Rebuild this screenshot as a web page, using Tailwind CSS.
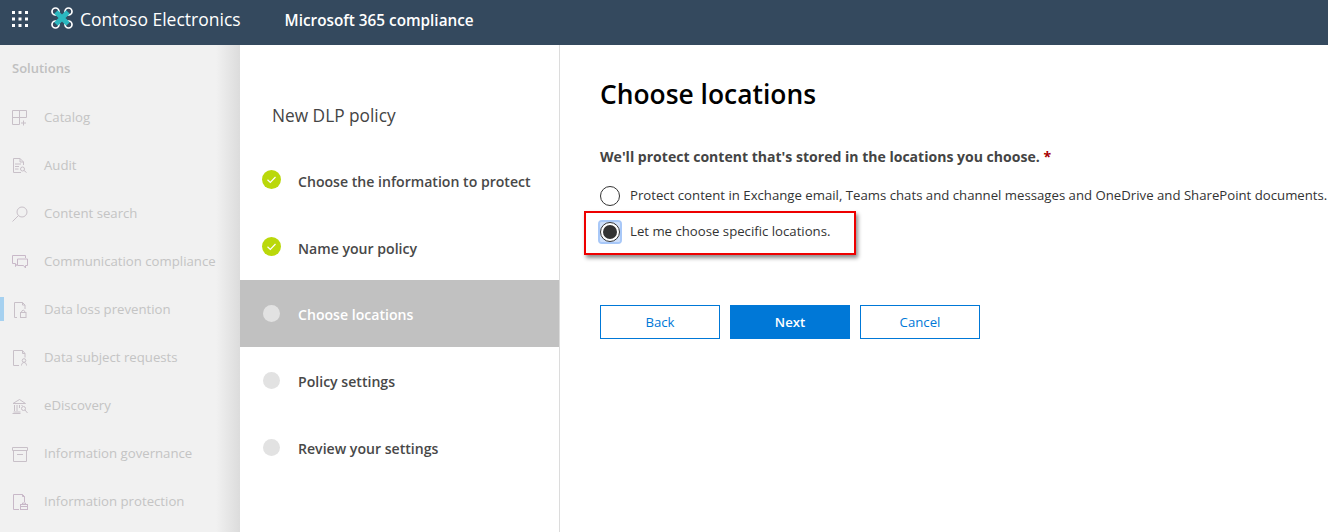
<!DOCTYPE html>
<html lang="en">
<head>
<meta charset="UTF-8">
<title>New DLP policy</title>
<script src="https://cdn.jsdelivr.net/npm/@tailwindcss/browser@4"></script>
</head>
<body class="h-[532px] w-[1328px] overflow-hidden bg-white font-['Open_Sans',sans-serif] text-[#333]">
  <!-- top bar -->
  <header class="flex h-[45px] items-center bg-[#34495e] pb-[8px] text-white">
    <svg class="ml-[12px] h-[16px] w-[16px]" viewBox="0 0 16 16" fill="#fff">
      <rect x="0" y="0" width="3" height="3"/><rect x="6.5" y="0" width="3" height="3"/><rect x="13" y="0" width="3" height="3"/>
      <rect x="0" y="6.5" width="3" height="3"/><rect x="6.5" y="6.5" width="3" height="3"/><rect x="13" y="6.5" width="3" height="3"/>
      <rect x="0" y="13" width="3" height="3"/><rect x="6.5" y="13" width="3" height="3"/><rect x="13" y="13" width="3" height="3"/>
    </svg>
    <svg class="mb-[2px] ml-[23px] h-[22px] w-[22px]" viewBox="0 0 22 22" fill="none">
      <circle cx="4.500" cy="4.500" r="3.500" stroke="#fff" stroke-width="1.700"/>
      <circle cx="17.500" cy="4.500" r="3.500" stroke="#fff" stroke-width="1.700"/>
      <circle cx="4.500" cy="17.500" r="3.500" stroke="#fff" stroke-width="1.700"/>
      <circle cx="17.500" cy="17.500" r="3.500" stroke="#fff" stroke-width="1.700"/>
      <path d="M5 5L17 17M17 5L5 17" stroke="#2bb8c0" stroke-width="5"/>
    </svg>
    <span class="ml-[7px] pt-[2px] text-[17.5px]">Contoso Electronics</span>
    <span class="ml-[44px] pt-[4px] text-[15.3px] font-semibold">Microsoft 365 compliance</span>
  </header>

  <div class="flex h-[487px]">
    <!-- faded nav -->
    <nav class="relative h-full w-[240px] shrink-0 bg-[#f1f1f1] bg-gradient-to-r from-[#f1f1f1] from-[90%] to-[#dcdcdc] text-[#c4c4c4]">
      <div class="pl-[12px] pt-[14px] text-[13px] font-semibold leading-[18px] text-[#c0c0c0]">Solutions</div>
      <ul class="mt-[17px] text-[13.2px]">
        <li class="flex h-[48px] items-center pl-[12px]">
          <svg class="h-[16px] w-[16px] shrink-0" viewBox="0 0 16 16" fill="none" stroke="#c8c0c8"><path d="M.5 14.500V.5h14v7M.5 7.500h14M7.500.5v14M.5 14.500h7M11.500 10.500v5M9 13h5"/></svg>
          <span class="ml-[16px]">Catalog</span>
        </li>
        <li class="flex h-[48px] items-center pl-[12px]">
          <svg class="h-[16px] w-[16px] shrink-0" viewBox="0 0 16 16" fill="none" stroke="#c8c0c8"><path d="M9 14.500H1.500V.5H8l3.500 3.500V7M8 .5V4h3.500M3 6h6M3 8.500h4M3 11h3.500"/><circle cx="10.500" cy="11" r="2"/><path d="M12 12.500l2.500 2"/></svg>
          <span class="ml-[16px]">Audit</span>
        </li>
        <li class="flex h-[48px] items-center pl-[12px]">
          <svg class="h-[16px] w-[16px] shrink-0" viewBox="0 0 16 16" fill="none" stroke="#c8c0c8"><circle cx="10" cy="6" r="5"/><path d="M6.500 9.500L.5 15.500"/></svg>
          <span class="ml-[16px]">Content search</span>
        </li>
        <li class="flex h-[48px] items-center pl-[12px]">
          <svg class="h-[16px] w-[16px] shrink-0" viewBox="0 0 16 16" fill="none" stroke="#c8b8c8"><path d="M3.500 9.500H.5V1.500h13V4M3.500 9.500v3l2-3M5.500 5h10v6.500h-2v2.500l-2-2.500h-6z"/></svg>
          <span class="ml-[16px]">Communication compliance</span>
        </li>
        <li class="relative flex h-[48px] items-center pl-[12px]">
          <div class="absolute left-0 top-[11px] h-[24px] w-[4px] bg-[#a6d1f0]"></div>
          <svg class="h-[16px] w-[16px] shrink-0" viewBox="0 0 16 16" fill="none" stroke="#c8c0c8"><path d="M5 15.500H2.500V.5h8l2.500 2.500v4M10.500.5V3h2.500"/><rect x="8.500" y="10.500" width="5.500" height="5"/><path d="M9.700 10.500V9a2 2 0 0 1 3 0v1.500"/></svg>
          <span class="ml-[16px]">Data loss prevention</span>
        </li>
        <li class="flex h-[48px] items-center pl-[12px]">
          <svg class="h-[16px] w-[16px] shrink-0" viewBox="0 0 16 16" fill="none" stroke="#c8c0c8"><path d="M7 15.500H1.500V.5h9l2.500 3v4M10.500.5v3H13"/><circle cx="12" cy="10.500" r="1.800"/><path d="M9.500 15.500c0-4 5-4 5 0"/></svg>
          <span class="ml-[16px]">Data subject requests</span>
        </li>
        <li class="flex h-[48px] items-center pl-[12px]">
          <svg class="h-[16px] w-[16px] shrink-0" viewBox="0 0 16 16" fill="none" stroke="#c8c0c8"><path d="M1 5.500L7.500 1.500l6 4zM2.500 7v6M5 7v6M7.500 7v3M10 7v1M1.500 14h7M.5 15.500h8"/><circle cx="11.500" cy="10.500" r="2"/><path d="M13 12l2.500 3"/></svg>
          <span class="ml-[16px]">eDiscovery</span>
        </li>
        <li class="flex h-[48px] items-center pl-[12px]">
          <svg class="h-[16px] w-[16px] shrink-0" viewBox="0 0 16 16" fill="none" stroke="#c8c0c8"><path d="M.5 1.500h15v3H.5zM1.500 4.500v11h13v-11M5 8.500h6"/></svg>
          <span class="ml-[16px]">Information governance</span>
        </li>
        <li class="flex h-[48px] items-center pl-[12px]">
          <svg class="h-[16px] w-[16px] shrink-0" viewBox="0 0 16 16" fill="none" stroke="#c8b8c8"><path d="M7 15.500H1.500V.5h9l2 2v5.500M10.500.5v2h2"/><rect x="8.500" y="10.500" width="7" height="5"/><path d="M10.500 10.500V9h3v1.500M8.500 12.500h7"/></svg>
          <span class="ml-[16px]">Information protection</span>
        </li>
      </ul>
    </nav>

    <!-- wizard steps -->
    <aside class="h-full w-[320px] shrink-0 border-r border-[#dcdcdc] bg-white">
      <div class="pl-[32px] pt-[57px] text-[17.3px] leading-[28px] text-[#444]">New DLP policy</div>
      <ol class="mt-[16px] text-[14.1px] font-semibold text-[#484848]">
        <li class="flex h-[67px] items-center pl-[22px]">
          <svg class="h-[19px] w-[19px]" viewBox="0 0 19 19"><circle cx="9.500" cy="9.500" r="9.500" fill="#bad80a"/><path d="M5.500 9.800l2.800 2.700 5.200-5.500" fill="none" stroke="#fff" stroke-width="1.200"/></svg>
          <span class="ml-[17px] pt-[4px]">Choose the information to protect</span>
        </li>
        <li class="flex h-[67px] items-center pl-[22px]">
          <svg class="h-[19px] w-[19px]" viewBox="0 0 19 19"><circle cx="9.500" cy="9.500" r="9.500" fill="#bad80a"/><path d="M5.500 9.800l2.800 2.700 5.200-5.500" fill="none" stroke="#fff" stroke-width="1.200"/></svg>
          <span class="ml-[17px] pt-[4px]">Name your policy</span>
        </li>
        <li class="flex h-[67px] items-center bg-[#c1c1c1] pl-[23px] text-white">
          <div class="h-[17px] w-[17px] rounded-full bg-[#e2e2e2]"></div>
          <span class="ml-[18px] pt-[2px]">Choose locations</span>
        </li>
        <li class="flex h-[67px] items-center pl-[23px]">
          <div class="h-[17px] w-[17px] rounded-full bg-[#e2e2e2]"></div>
          <span class="ml-[18px] pt-[2px]">Policy settings</span>
        </li>
        <li class="flex h-[67px] items-center pl-[23px]">
          <div class="h-[17px] w-[17px] rounded-full bg-[#e2e2e2]"></div>
          <span class="ml-[18px] pt-[2px]">Review your settings</span>
        </li>
      </ol>
    </aside>

    <!-- main content -->
    <main class="relative min-w-0 flex-1 pl-[40px]">
      <h1 class="pt-[29px] text-[26.4px] font-semibold leading-[40px] text-black">Choose locations</h1>
      <p class="mt-[33px] text-[14.05px] font-bold leading-[20px] text-[#444]">We'll protect content that's stored in the locations you choose. <span class="text-[#a80000]">*</span></p>
      <div class="mt-[19px] flex h-[20px] items-center whitespace-nowrap text-[13.2px] text-[#333]">
        <div class="h-[20px] w-[20px] shrink-0 rounded-full border border-[#333]"></div>
        <span class="ml-[10px]">Protect content in Exchange email, Teams chats and channel messages and OneDrive and SharePoint documents.</span>
      </div>
      <div class="mt-[16px] flex h-[20px] items-center text-[13.2px] text-[#333]">
        <div class="flex h-[20px] w-[20px] shrink-0 items-center justify-center rounded-[2px] bg-[#cfe0fb] outline-2 outline-[#a8c8f8]">
          <div class="flex h-[20px] w-[20px] items-center justify-center rounded-full border border-[#333] bg-white">
            <div class="h-[14px] w-[14px] rounded-full bg-[#333]"></div>
          </div>
        </div>
        <span class="ml-[10px]">Let me choose specific locations.</span>
      </div>
      <div class="mt-[63px] flex gap-[10px] text-[13.2px]">
        <button class="h-[34px] w-[120px] border border-[#0078d7] bg-white pt-[2px] text-[#0078d7]">Back</button>
        <button class="h-[34px] w-[120px] bg-[#0078d7] pt-[2px] font-semibold text-white">Next</button>
        <button class="h-[34px] w-[120px] border border-[#0078d7] bg-white pt-[2px] text-[#0078d7]">Cancel</button>
      </div>
      <!-- red callout over the selected option -->
      <div class="absolute left-[24px] top-[166px] h-[44px] w-[272px] border-[2px] border-[#ee0000] shadow-[2px_3px_4px_rgba(0,0,0,0.45)]"></div>
    </main>
  </div>
</body>
</html>
